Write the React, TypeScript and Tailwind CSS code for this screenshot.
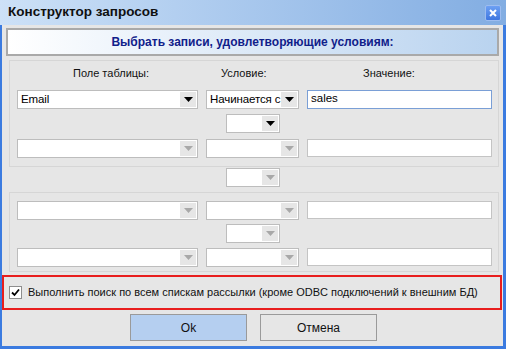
import React from 'react';

const FONT = { fontFamily: '"Liberation Sans", Arial, sans-serif' };

function Arrow({ enabled }: { enabled: boolean }) {
  return (
    <svg width="9" height="5" viewBox="0 0 9 5">
      <polygon points="0,0 9,0 4.5,5" fill={enabled ? '#000' : '#a8a8a8'} />
    </svg>
  );
}

function Select({ w, value, enabled = false }: { w: string; value?: string; enabled?: boolean }) {
  return (
    <div className={`${w} h-[19px] border border-[#bdbdbd] bg-white flex items-stretch p-[1px]`}>
      <div className="flex-1 pl-[2px] text-[11.5px] leading-[15px] text-black overflow-hidden whitespace-nowrap tracking-[-0.1px]">{value}</div>
      <div className="w-[16px] bg-[#e6e6e6] flex items-center justify-center">
        <Arrow enabled={enabled} />
      </div>
    </div>
  );
}

function Input({ value, active = false }: { value?: string; active?: boolean }) {
  return (
    <div
      className={`w-[185px] border bg-white pl-[3px] text-[11.5px] leading-[15px] text-black ${
        active ? 'h-[19px] border-[#7a9fd6]' : 'h-[18px] border-[#c4c4c4]'
      }`}
    >
      {value}
    </div>
  );
}

function Row({ first, second, third, active }: { first?: string; second?: string; third?: string; active?: boolean }) {
  return (
    <div className="flex gap-[8px]">
      <Select w="w-[181px]" value={first} enabled={active} />
      <Select w="w-[93px]" value={second} enabled={active} />
      <Input value={third} active={active} />
    </div>
  );
}

function Link({ enabled = false }: { enabled?: boolean }) {
  return (
    <div className="pl-[209px]">
      <div className="w-[54px] h-[19px] border border-[#bdbdbd] bg-white flex justify-end p-[1px]">
        <div className="w-[16px] bg-[#e6e6e6] flex items-center justify-center">
          <Arrow enabled={enabled} />
        </div>
      </div>
    </div>
  );
}

export default function App() {
  return (
    <div className="w-[506px] h-[349px] flex flex-col bg-[#e6e6e6] overflow-hidden" style={FONT}>
      {/* title bar */}
      <div className="h-[25px] flex items-center justify-between bg-gradient-to-r from-[#cde1f7] to-[#82ade2] pl-[8px] pr-[5px]">
        <span className="text-[13.5px] font-bold text-[#101010]">Конструктор запросов</span>
        <div className="w-[16px] h-[16px] rounded-[2px] bg-gradient-to-b from-[#6da0f3] to-[#3f77e0] border border-[#9dbdf0] flex items-center justify-center">
          <svg width="8" height="8" viewBox="0 0 8 8">
            <path d="M1 1 L7 7 M7 1 L1 7" stroke="#fff" strokeWidth="2" />
          </svg>
        </div>
      </div>

      <div className="flex-1 flex flex-col border-l-2 border-r-[3px] border-b-[3px] border-[#3b7be0]">
        {/* header */}
        <div className="mt-[3px] ml-[4px] w-[493px] h-[28px] border-2 border-[#a9a9a9] bg-gradient-to-r from-white to-[#b9d3ef] flex items-center justify-center">
          <span className="text-[12px] font-bold text-[#10208a]">Выбрать записи, удовлетворяющие условиям:</span>
        </div>

        {/* group 1 */}
        <div className="mt-[4px] ml-[7px] w-[490px] h-[107px] border border-[#d6d6d6] flex flex-col pl-[7px]">
          <div className="flex text-[11px] leading-[14px] text-[#111] pt-[5px] pl-[56px]">
            <span className="w-[148px]">Поле таблицы:</span>
            <span className="w-[142px]">Условие:</span>
            <span>Значение:</span>
          </div>
          <div className="mt-[10px]">
            <Row first="Email" second="Начинается с" third="sales" active />
          </div>
          <div className="mt-[5px]">
            <Link enabled />
          </div>
          <div className="mt-[6px]">
            <Row />
          </div>
        </div>

        <div className="mt-[1px] pl-[15px]">
          <Link />
        </div>

        {/* group 2 */}
        <div className="mt-[5px] ml-[7px] w-[490px] h-[80px] border border-[#d6d6d6] flex flex-col pl-[7px] pt-[8px]">
          <Row />
          <div className="mt-[4px]">
            <Link />
          </div>
          <div className="mt-[5px]">
            <Row />
          </div>
        </div>

        {/* checkbox */}
        <div className="mt-[3px] w-[500px] h-[35px] border-2 border-[#e81e1e] flex items-center pl-[5px] gap-[6px]">
          <div className="w-[13px] h-[13px] border border-[#8e8e8e] bg-white flex items-center justify-center">
            <svg width="9" height="9" viewBox="0 0 9 9">
              <path d="M1 4.5 L3.5 7 L8 1.5" stroke="#000" strokeWidth="1.8" fill="none" />
            </svg>
          </div>
          <span className="text-[11px] text-[#111] whitespace-nowrap">
            Выполнить поиск по всем спискам рассылки (кроме ODBC подключений к внешним БД)
          </span>
        </div>

        {/* buttons */}
        <div className="mt-[4px] flex gap-[13px] pl-[128px]">
          <button className="w-[117px] h-[27px] border border-[#9a9a9a] bg-[#b5cff0] text-[12px] text-[#111]">Ok</button>
          <button className="w-[117px] h-[27px] border border-[#9a9a9a] bg-[#e6e6e6] text-[12px] text-[#111]">Отмена</button>
        </div>
      </div>
    </div>
  );
}
